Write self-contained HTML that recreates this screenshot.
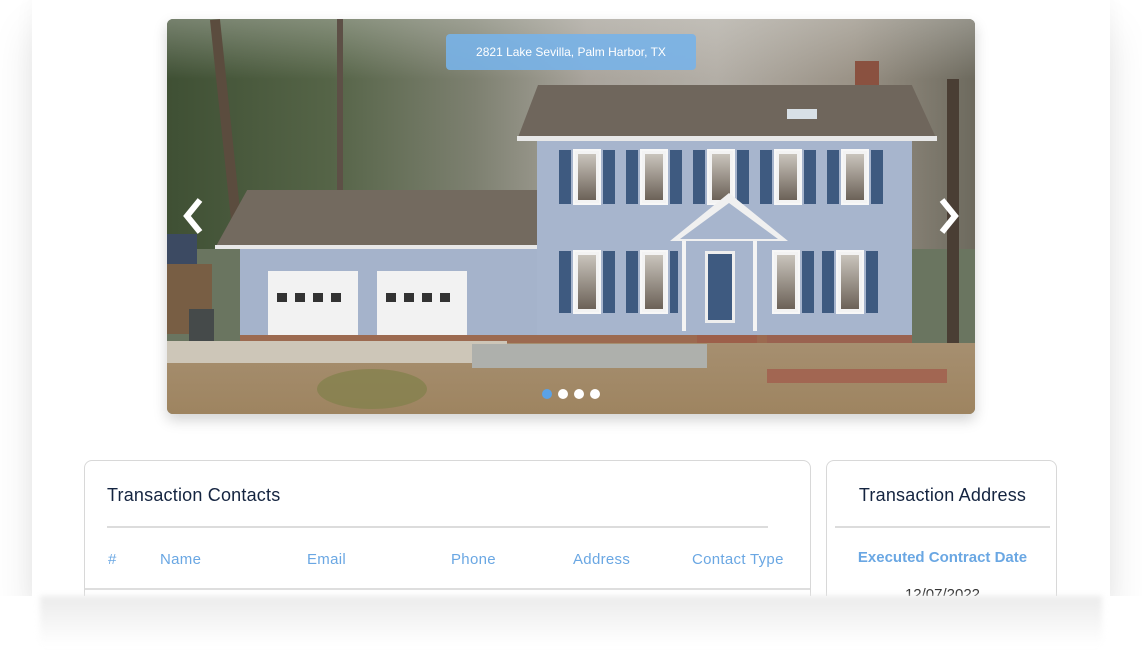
<!DOCTYPE html>
<html><head><style>
*{margin:0;padding:0;box-sizing:border-box}
body{width:1142px;height:669px;background:#fff;position:relative;overflow:hidden;font-family:"Liberation Sans",sans-serif}
.a{position:absolute}
.card{left:32px;top:0;width:1078px;height:596px;background:#fff;box-shadow:0 30px 40px rgba(0,0,0,0.10),0 0 20px rgba(0,0,0,0.04)}
.img{left:167px;top:19px;width:808px;height:395px;border-radius:6px;overflow:hidden;box-shadow:0 6px 14px rgba(0,0,0,0.18);background:#6a7560}
.sh{background:#3e5a80}
.win{background:#f3f3f3;border:2px solid #f7f7f7}
.win i{position:absolute;left:3px;right:3px;top:3px;bottom:3px;background:linear-gradient(#c9c4bc,#6c6258)}
.box{background:#fff;border:1px solid #d8d8d8;border-radius:8px;overflow:hidden}
.th{color:#6aa7e3;font-size:15px;letter-spacing:0.3px}
</style></head><body>
<div class="a card"></div>
<div class="a img">
  <div class="a" style="left:0;top:0;width:808px;height:230px;background:linear-gradient(90deg,#3f5034 0%,#556447 20%,#7d8070 38%,#a9a49c 52%,#b3aea6 68%,#9a9286 85%,#6d6a5e 100%)"></div>
  <div class="a" style="left:0;top:0;width:808px;height:60px;background:linear-gradient(rgba(220,220,215,0.35),rgba(220,220,215,0))"></div>
  <div class="a" style="left:55px;top:0;width:10px;height:230px;background:#5b4c3e;transform:rotate(-6deg)"></div>
  <div class="a" style="left:170px;top:0;width:6px;height:200px;background:#5d5046"></div>
  <div class="a" style="left:780px;top:60px;width:12px;height:290px;background:#4a3e34"></div>
  <div class="a" style="left:688px;top:42px;width:24px;height:40px;background:#8a5140"></div>
  <div class="a" style="left:350px;top:66px;width:420px;height:55px;background:#6f665c;clip-path:polygon(5% 0,94% 0,100% 100%,0 100%)"></div>
  <div class="a" style="left:350px;top:117px;width:420px;height:5px;background:#e8e8e8"></div>
  <div class="a" style="left:620px;top:90px;width:30px;height:10px;background:#d8e0e6"></div>
  <div class="a" style="left:370px;top:122px;width:375px;height:200px;background:#a7b5cd"></div>
  <div class="a" style="left:48px;top:171px;width:322px;height:58px;background:#736a5f;clip-path:polygon(10% 0,100% 0,100% 100%,0 100%)"></div>
  <div class="a" style="left:48px;top:226px;width:322px;height:4px;background:#e8e8e8"></div>
  <div class="a" style="left:73px;top:230px;width:297px;height:92px;background:#a5b3cb"></div>
  <div class="a" style="left:101px;top:252px;width:90px;height:72px;background:#f2f2f2"></div>
  <div class="a" style="left:210px;top:252px;width:90px;height:72px;background:#f2f2f2"></div>
  <div class="a" style="left:110px;top:274px;width:72px;height:9px;background:repeating-linear-gradient(90deg,#333 0 10px,#f2f2f2 10px 18px)"></div>
  <div class="a" style="left:219px;top:274px;width:72px;height:9px;background:repeating-linear-gradient(90deg,#333 0 10px,#f2f2f2 10px 18px)"></div>
  <div class="a sh" style="left:392px;top:131px;width:12px;height:54px"></div><div class="a win" style="left:406px;top:130px;width:28px;height:56px"><i></i></div><div class="a sh" style="left:436px;top:131px;width:12px;height:54px"></div>
  <div class="a sh" style="left:459px;top:131px;width:12px;height:54px"></div><div class="a win" style="left:473px;top:130px;width:28px;height:56px"><i></i></div><div class="a sh" style="left:503px;top:131px;width:12px;height:54px"></div>
  <div class="a sh" style="left:526px;top:131px;width:12px;height:54px"></div><div class="a win" style="left:540px;top:130px;width:28px;height:56px"><i></i></div><div class="a sh" style="left:570px;top:131px;width:12px;height:54px"></div>
  <div class="a sh" style="left:593px;top:131px;width:12px;height:54px"></div><div class="a win" style="left:607px;top:130px;width:28px;height:56px"><i></i></div><div class="a sh" style="left:637px;top:131px;width:12px;height:54px"></div>
  <div class="a sh" style="left:660px;top:131px;width:12px;height:54px"></div><div class="a win" style="left:674px;top:130px;width:28px;height:56px"><i></i></div><div class="a sh" style="left:704px;top:131px;width:12px;height:54px"></div>
  <div class="a" style="left:503px;top:174px;width:118px;height:48px;background:#f0f0f0;clip-path:polygon(50% 0,100% 100%,0 100%)"></div>
  <div class="a" style="left:513px;top:184px;width:98px;height:36px;background:#a7b5cd;clip-path:polygon(50% 0,100% 100%,0 100%)"></div>
  <div class="a sh" style="left:392px;top:232px;width:12px;height:62px"></div><div class="a win" style="left:406px;top:231px;width:28px;height:64px"><i></i></div><div class="a sh" style="left:436px;top:232px;width:12px;height:62px"></div>
  <div class="a sh" style="left:459px;top:232px;width:12px;height:62px"></div><div class="a win" style="left:473px;top:231px;width:28px;height:64px"><i></i></div><div class="a sh" style="left:503px;top:232px;width:8px;height:62px"></div>
  <div class="a" style="left:538px;top:232px;width:30px;height:72px;background:#3e5a80;border:3px solid #eee"></div>
  <div class="a" style="left:515px;top:222px;width:4px;height:90px;background:#f4f4f4"></div>
  <div class="a" style="left:586px;top:222px;width:4px;height:90px;background:#f4f4f4"></div>
  <div class="a win" style="left:605px;top:231px;width:28px;height:64px"><i></i></div><div class="a sh" style="left:635px;top:232px;width:12px;height:62px"></div>
  <div class="a sh" style="left:655px;top:232px;width:12px;height:62px"></div><div class="a win" style="left:669px;top:231px;width:28px;height:64px"><i></i></div><div class="a sh" style="left:699px;top:232px;width:12px;height:62px"></div>
  <div class="a" style="left:73px;top:316px;width:672px;height:8px;background:#9c6a50"></div>
  <div class="a" style="left:600px;top:316px;width:145px;height:36px;background:#9a6250"></div>
  <div class="a" style="left:530px;top:316px;width:60px;height:36px;background:#9d5f4a"></div>
  <div class="a" style="left:0;top:324px;width:808px;height:71px;background:linear-gradient(180deg,#a68f70,#9e8460)"></div>
  <div class="a" style="left:0;top:322px;width:340px;height:22px;background:#cdc6b8"></div>
  <div class="a" style="left:305px;top:325px;width:235px;height:24px;background:#aeb0ac"></div>
  <div class="a" style="left:600px;top:350px;width:180px;height:14px;background:#a26652"></div>
  <div class="a" style="left:150px;top:350px;width:110px;height:40px;background:#80804a;border-radius:50%;opacity:.7"></div>
  <div class="a" style="left:0;top:215px;width:30px;height:30px;background:#3c4a62"></div>
  <div class="a" style="left:0;top:245px;width:45px;height:70px;background:#7a5a40;opacity:.85"></div>
  <div class="a" style="left:22px;top:290px;width:25px;height:32px;background:#454a4a"></div>
  <div class="a" style="left:279px;top:15px;width:250px;height:36px;background:rgba(120,178,232,0.9);border-radius:4px;color:#fff;font-size:12px;text-align:center;line-height:36px">2821 Lake Sevilla, Palm Harbor, TX</div>
  <svg class="a" style="left:14px;top:178px" width="24" height="38"><path d="M19 3 L6 19 L19 35" stroke="#fff" stroke-width="6" fill="none"/></svg>
  <svg class="a" style="left:770px;top:178px" width="24" height="38"><path d="M5 3 L18 19 L5 35" stroke="#fff" stroke-width="6" fill="none"/></svg>
  <div class="a" style="left:375px;top:370px;width:10px;height:10px;border-radius:50%;background:#5ba2e6"></div>
  <div class="a" style="left:391px;top:370px;width:10px;height:10px;border-radius:50%;background:#fff"></div>
  <div class="a" style="left:407px;top:370px;width:10px;height:10px;border-radius:50%;background:#fff"></div>
  <div class="a" style="left:423px;top:370px;width:10px;height:10px;border-radius:50%;background:#fff"></div>
</div>

<div class="a box" style="left:84px;top:460px;width:727px;height:150px">
  <div class="a" style="left:22px;top:24px;font-size:18px;color:#142440;letter-spacing:0.2px">Transaction Contacts</div>
  <div class="a" style="left:22px;top:65px;width:661px;height:2px;background:#dcdcdc"></div>
  <div class="a th" style="left:23px;top:90px">#</div>
  <div class="a th" style="left:75px;top:90px">Name</div>
  <div class="a th" style="left:222px;top:90px">Email</div>
  <div class="a th" style="left:366px;top:90px">Phone</div>
  <div class="a th" style="left:488px;top:90px">Address</div>
  <div class="a th" style="left:607px;top:90px">Contact Type</div>
  <div class="a" style="left:0;top:127px;width:727px;height:2px;background:#dedede"></div>
</div>
<div class="a box" style="left:826px;top:460px;width:231px;height:150px">
  <div class="a" style="left:0;top:24px;width:231px;text-align:center;font-size:18px;color:#142440;letter-spacing:0.2px">Transaction Address</div>
  <div class="a" style="left:8px;top:65px;width:215px;height:2px;background:#dcdcdc"></div>
  <div class="a" style="left:0;top:88px;width:231px;text-align:center;font-size:15px;font-weight:bold;color:#6aa7e3">Executed Contract Date</div>
  <div class="a" style="left:0;top:125px;width:231px;text-align:center;font-size:15px;color:#333">12/07/2022</div>
</div>
<div class="a" style="left:0;top:596px;width:1142px;height:73px;background:#fff"></div>
<div class="a" style="left:40px;top:596px;width:1062px;height:50px;background:linear-gradient(#ebebeb,rgba(255,255,255,0));filter:blur(3px)"></div>
</body></html>
